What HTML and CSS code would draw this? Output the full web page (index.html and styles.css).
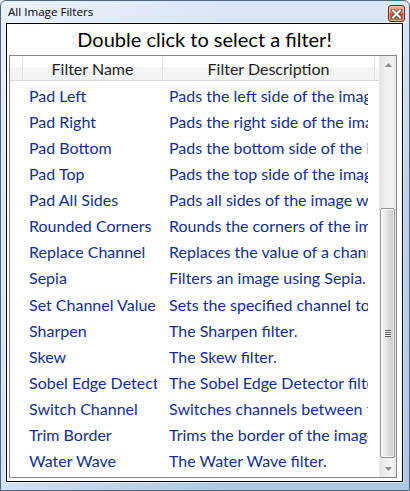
FILE: index.html
```html
<!DOCTYPE html>
<html lang="en">
<head>
  <meta charset="UTF-8">
  <title>All Image Filters</title>
  <link rel="stylesheet" href="styles.css">
</head>
<body>

  <div class="window">
    <div class="titlebar">
      <span class="title">All Image Filters</span>
      <button class="close-btn">
        <svg width="11" height="10" viewBox="0 0 11 10">
          <path d="M2 1.5 L9 8.5 M9 1.5 L2 8.5" stroke="#4a4a4a" stroke-width="3.6" stroke-linecap="square"/>
          <path d="M2 1.5 L9 8.5 M9 1.5 L2 8.5" stroke="#fff" stroke-width="2" stroke-linecap="square"/>
        </svg>
      </button>
    </div>

    <div class="client">
      <h1 class="prompt">Double click to select a filter!</h1>

      <div class="listbox">
        <div class="list-main">
          <div class="list-header">
            <div class="hcell spacer"></div>
            <div class="hcell col-name">Filter Name</div>
            <div class="hcell col-desc">Filter Description</div>
          </div>

          <div class="rows">
            <div class="row"><span class="col-name">Pad Left</span><span class="col-desc">Pads the left side of the image with a color.</span></div>
            <div class="row"><span class="col-name">Pad Right</span><span class="col-desc">Pads the right side of the image with a color.</span></div>
            <div class="row"><span class="col-name">Pad Bottom</span><span class="col-desc">Pads the bottom side of the image with a color.</span></div>
            <div class="row"><span class="col-name">Pad Top</span><span class="col-desc">Pads the top side of the image with a color.</span></div>
            <div class="row"><span class="col-name">Pad All Sides</span><span class="col-desc">Pads all sides of the image with a color.</span></div>
            <div class="row"><span class="col-name">Rounded Corners</span><span class="col-desc">Rounds the corners of the image.</span></div>
            <div class="row"><span class="col-name">Replace Channel</span><span class="col-desc">Replaces the value of a channel.</span></div>
            <div class="row"><span class="col-name">Sepia</span><span class="col-desc">Filters an image using Sepia.</span></div>
            <div class="row"><span class="col-name">Set Channel Value</span><span class="col-desc">Sets the specified channel to a value.</span></div>
            <div class="row"><span class="col-name">Sharpen</span><span class="col-desc">The Sharpen filter.</span></div>
            <div class="row"><span class="col-name">Skew</span><span class="col-desc">The Skew filter.</span></div>
            <div class="row"><span class="col-name">Sobel Edge Detector</span><span class="col-desc">The Sobel Edge Detector filter.</span></div>
            <div class="row"><span class="col-name">Switch Channel</span><span class="col-desc">Switches channels between two values.</span></div>
            <div class="row"><span class="col-name">Trim Border</span><span class="col-desc">Trims the border of the image.</span></div>
            <div class="row"><span class="col-name">Water Wave</span><span class="col-desc">The Water Wave filter.</span></div>
          </div>
        </div>

        <div class="scrollbar">
          <div class="sb-btn">
            <svg width="7" height="4" viewBox="0 0 7 4"><path d="M0 4 L3.5 0 L7 4 Z" fill="#8a8a8a"/></svg>
          </div>
          <div class="sb-track">
            <div class="sb-thumb">
              <span class="grip"></span>
            </div>
          </div>
          <div class="sb-btn">
            <svg width="7" height="4" viewBox="0 0 7 4"><path d="M0 0 L3.5 4 L7 0 Z" fill="#8a8a8a"/></svg>
          </div>
        </div>
      </div>
    </div>
  </div>

</body>
</html>
```
FILE: styles.css
```css
* {
  margin: 0;
  padding: 0;
  box-sizing: border-box;
}

body {
  background: #ffffff;
  font-family: 'Lato', sans-serif;
}

.window {
  width: 410px;
  height: 491px;
  border: 1px solid #4f6580;
  border-radius: 6px 6px 0 0;
  background:
    linear-gradient(to right, rgba(255, 255, 255, 0.45), rgba(255, 255, 255, 0) 55%),
    linear-gradient(#dbe7f5, #bcd2ea 40%, #aec8e4);
  display: flex;
  flex-direction: column;
}

.titlebar {
  height: 22px;
  display: flex;
  align-items: flex-start;
  justify-content: space-between;
  padding: 0 4px 0 7px;
}

.titlebar .title {
  font-family: 'Open Sans', sans-serif;
  font-size: 11.6px;
  line-height: 22px;
  color: #000;
}

.close-btn {
  width: 17px;
  height: 17px;
  margin-top: 4px;
  border: 1px solid #6d2c20;
  border-radius: 3px;
  background: linear-gradient(#eeb09c 0%, #e0806a 45%, #cc4a2c 52%, #dc6f4e 100%);
  box-shadow: inset 0 0 0 1px rgba(255, 220, 200, 0.5);
  display: flex;
  align-items: center;
  justify-content: center;
}

.client {
  height: 459px;
  margin: 0 6px 0 5px;
  border: 1px solid #000;
  box-shadow: 0 0 0 1px rgba(255, 255, 255, 0.55);
  background: #fff;
  display: flex;
  flex-direction: column;
}

.prompt {
  height: 31px;
  font-family: 'Lato', sans-serif;
  font-weight: normal;
  font-size: 20px;
  line-height: 31px;
  text-align: center;
  color: #000;
}

.listbox {
  height: 423px;
  margin: 0 5px 0 2px;
  border: 1px solid #828790;
  display: flex;
}

.list-main {
  flex: 1;
  min-width: 0;
}

.list-header {
  display: flex;
  height: 25px;
  border-bottom: 1px solid #d5d5d5;
  background: linear-gradient(#ffffff 0%, #ffffff 45%, #f4f5f6 50%, #f2f3f4 100%);
}

.hcell {
  border-right: 1px solid #dfe0e2;
  font-size: 16px;
  line-height: 25px;
  text-align: center;
  color: #1e1e1e;
}

.hcell.spacer {
  width: 13px;
}

.hcell.col-name {
  width: 140px;
}

.hcell.col-desc {
  width: 212px;
}

.rows {
  padding-top: 1px;
}

.row {
  display: flex;
  height: 26.14px;
  align-items: center;
  padding-left: 13px;
  font-size: 16px;
  color: #142f86;
}

.row span {
  white-space: nowrap;
  overflow: hidden;
  margin: 0 6px;
}

.row .col-name {
  width: 128px;
}

.row .col-desc {
  width: 199px;
}

.scrollbar {
  width: 17px;
  display: flex;
  flex-direction: column;
  background: linear-gradient(to right, #e3e3e3, #eeeeee 30%, #f2f2f2 70%, #e9e9e9);
  border-left: 1px solid #ececec;
}

.sb-btn {
  height: 17px;
  display: flex;
  align-items: center;
  justify-content: center;
}

.sb-track {
  flex: 1;
  padding: 135px 1px 0 0;
}

.sb-thumb {
  height: 250px;
  border: 1px solid #979797;
  border-radius: 2px;
  background: linear-gradient(to right, #f5f5f5, #e6e6e6 45%, #d9d9d9 55%, #cfcfcf);
  box-shadow: inset 0 0 0 1px rgba(255, 255, 255, 0.7);
  display: flex;
  align-items: center;
  justify-content: center;
}

.grip {
  width: 6px;
  height: 7px;
  background: repeating-linear-gradient(#5a5a5a 0 1px, #f5f5f5 1px 2px);
}
```
